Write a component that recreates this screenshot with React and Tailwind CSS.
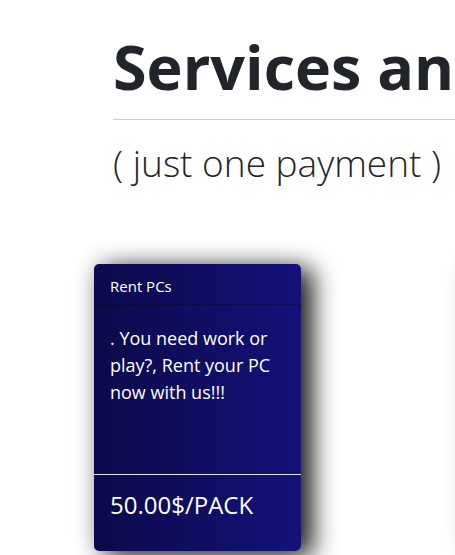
export default function App() {
    const cards = [
        {
            title: "Rent PCs",
            text: ". You need work or play?, Rent your PC now with us!!!",
            price: "50.00$/PACK",
        },
        {
            title: "Repairs",
            text: ". Fix your PC fast.",
            price: "20.00$/PACK",
        },
    ];

    return (
        <main
            className="w-full min-h-screen overflow-hidden bg-white text-[#212529]"
            style={{ fontFamily: '"Open Sans", "Noto Sans", sans-serif' }}
        >
            {/* Titre */}
            <section className="pl-[113px] pt-[25px] w-[900px]">
                <h1 className="text-[61px] font-bold leading-[84px] whitespace-nowrap">
                    Services and Prices
                </h1>
                <hr className="mt-[10px] border-t border-[#cfcfcf]" />
                <p className="mt-[18px] text-[37px] font-light leading-[50px] whitespace-nowrap">
                    ( just one payment )
                </p>
            </section>

            {/* Cartes */}
            <section className="flex gap-[166px] pl-[94px] pt-[76px] w-[900px]">
                {cards.map((card) => (
                    <div
                        key={card.title}
                        className="w-[207px] h-[287px] shrink-0 flex flex-col rounded-[5px] text-white bg-linear-to-r from-[#0c0a4b] to-[#13127a] shadow-[12px_5px_24px_rgba(0,0,0,0.85),0_0_24px_rgba(0,0,0,0.2)]"
                    >
                        <div className="px-4 pt-[10px] pb-[6px] text-[15px] leading-6 border-b border-black/25">
                            {card.title}
                        </div>
                        <div className="flex-1 px-4 pt-5 pb-4 text-[18px] leading-[27px]">
                            {card.text}
                        </div>
                        <div className="border-t border-[#e6e6f0] px-4 pt-3 pb-7 text-[24px] leading-9">
                            {card.price}
                        </div>
                    </div>
                ))}
            </section>
        </main>
    );
}
